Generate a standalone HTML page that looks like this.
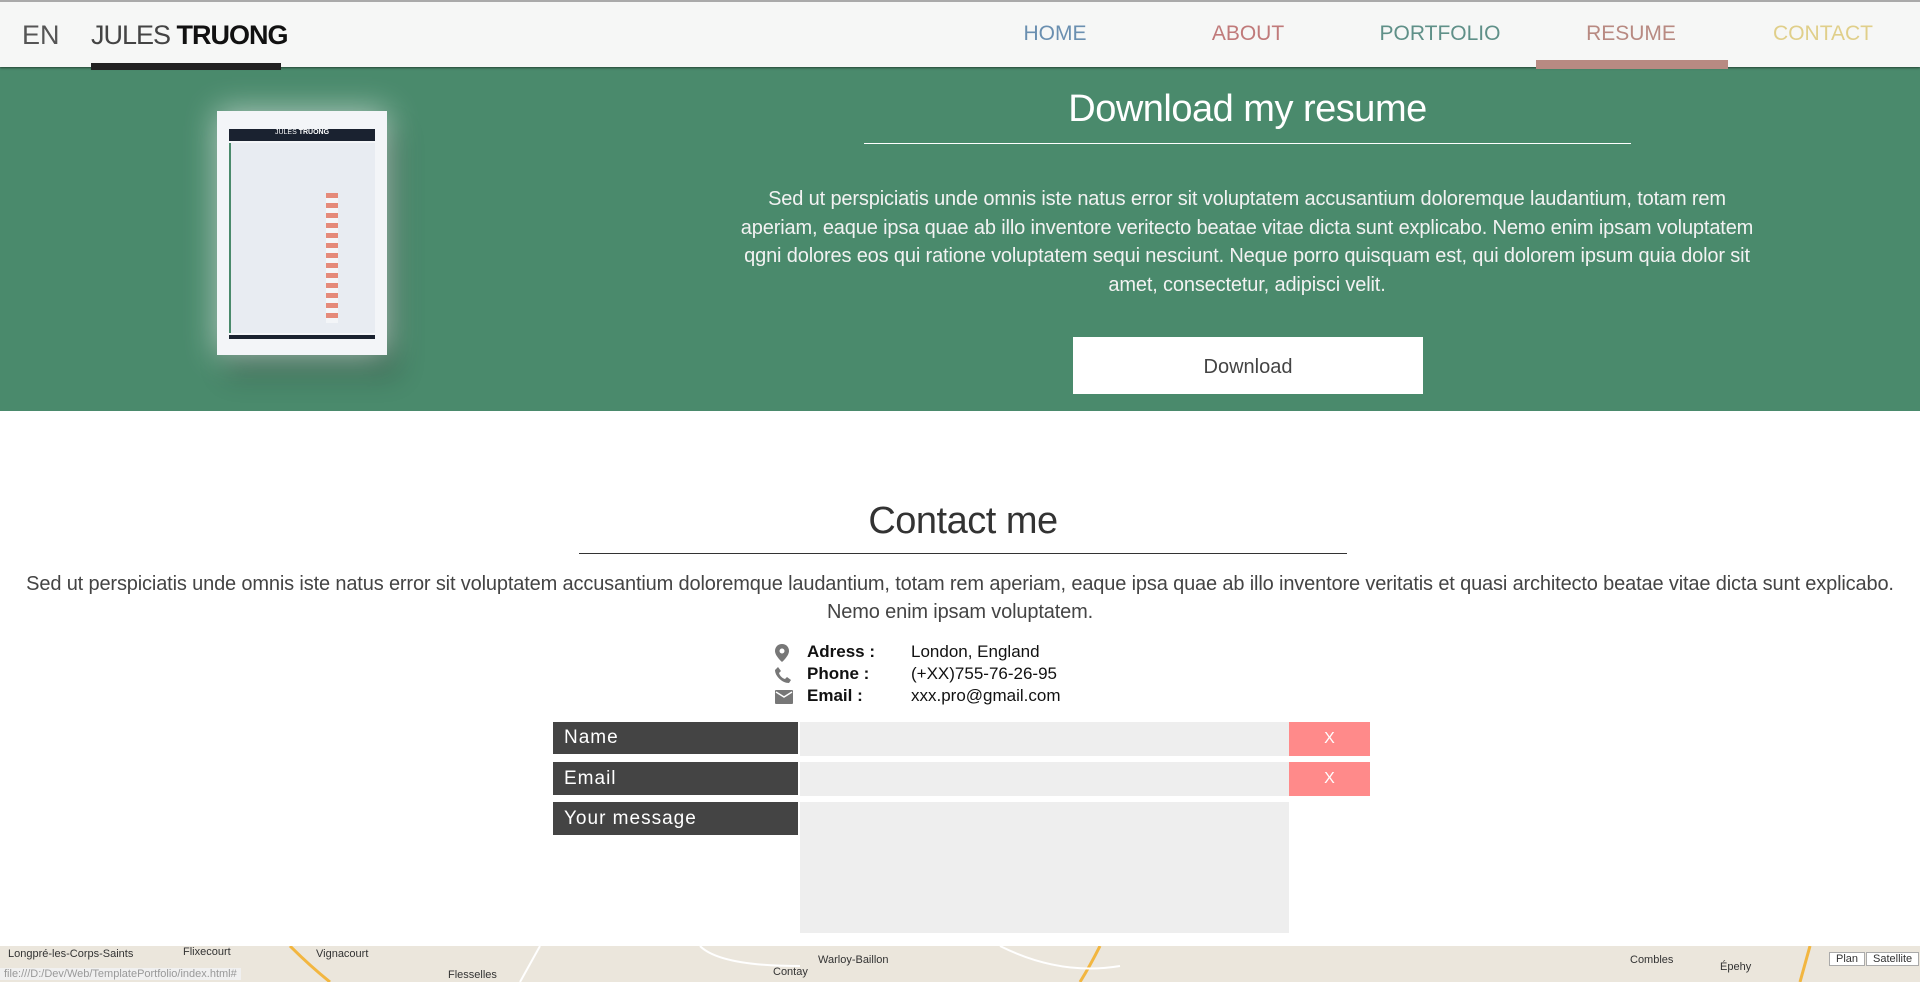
<!DOCTYPE html>
<html><head><meta charset="utf-8"><style>
*{margin:0;padding:0;box-sizing:border-box}
body{width:1920px;height:982px;overflow:hidden;background:#fff;font-family:"Liberation Sans",sans-serif;position:relative;color:#333}
.abs{position:absolute}
#nav{left:0;top:0;width:1920px;height:67px;background:#f6f7f6;border-top:2px solid #aaa;box-shadow:0 1px 2px rgba(0,0,0,.5);z-index:2}
.n{position:absolute;top:20px;font-size:21px;transform:translateX(-50%)}
#green{left:0;top:67px;width:1920px;height:344px;background:#4a8a6c}
</style></head><body>
<div id="nav" class="abs">
 <div class="abs" style="left:22px;top:18px;font-size:27px;color:#555">EN</div>
 <div class="abs" style="left:91px;top:18px;font-size:27px;color:#444;letter-spacing:-1px">JULES <b style="color:#111">TRUONG</b></div>
 <div class="abs" style="left:91px;top:61px;width:190px;height:7px;background:#222"></div>
 <div class="n" style="left:1055px;color:#6a8fb0">HOME</div>
 <div class="n" style="left:1248px;color:#c07a7a">ABOUT</div>
 <div class="n" style="left:1440px;color:#5f9088">PORTFOLIO</div>
 <div class="n" style="left:1631px;color:#b88a82">RESUME</div>
 <div class="n" style="left:1823px;color:#e0cf8a">CONTACT</div>
 <div class="abs" style="left:1536px;top:58px;width:192px;height:9px;background:#b88a82"></div>
</div>
<div id="green" class="abs"></div>
<div class="abs" style="left:217px;top:111px;width:170px;height:244px;background:#f3f5f8;box-shadow:0 0 30px rgba(255,255,255,.6),10px 20px 25px rgba(0,0,0,.25);padding:18px 12px 18px 12px">
 <div style="height:12px;background:#1a2230;color:#fff;font-size:7px;text-align:center">JULES <b>TRUONG</b></div>
 <div style="height:190px;background:#e8ecf2;border-left:2px solid #4a8a6c;margin-top:2px;position:relative">
  <div style="position:absolute;left:95px;top:50px;width:12px;height:130px;background:repeating-linear-gradient(#e58a7a 0 5px,#f3f5f8 5px 10px)"></div>
 </div>
 <div style="height:4px;background:#1a2230;margin-top:2px"></div>
</div>
<div class="abs" style="left:864px;top:88px;width:767px;text-align:center;font-size:38px;color:#fff;letter-spacing:-0.5px">Download my resume</div>
<div class="abs" style="left:864px;top:143px;width:767px;height:1px;background:#fff"></div>
<div class="abs" style="left:740px;top:185px;width:1014px;text-align:center;font-size:20px;line-height:28.5px;color:#f2f2f2;letter-spacing:-0.15px">Sed ut perspiciatis unde omnis iste natus error sit voluptatem accusantium doloremque laudantium, totam rem aperiam, eaque ipsa quae ab illo inventore veritecto beatae vitae dicta sunt explicabo. Nemo enim ipsam voluptatem qgni dolores eos qui ratione voluptatem sequi nesciunt. Neque porro quisquam est, qui dolorem ipsum quia dolor sit amet, consectetur, adipisci velit.</div>
<div class="abs" style="left:1073px;top:337px;width:350px;height:57px;background:#fff;text-align:center;line-height:60px;font-size:20px;color:#444">Download</div>

<div class="abs" style="left:579px;top:500px;width:768px;text-align:center;font-size:38px;color:#333;letter-spacing:-0.5px">Contact me</div>
<div class="abs" style="left:579px;top:553px;width:768px;height:1px;background:#333"></div>
<div class="abs" style="left:10px;top:570px;width:1900px;text-align:center;font-size:20px;line-height:28px;color:#444;letter-spacing:-0.15px">Sed ut perspiciatis unde omnis iste natus error sit voluptatem accusantium doloremque laudantium, totam rem aperiam, eaque ipsa quae ab illo inventore veritatis et quasi architecto beatae vitae dicta sunt explicabo. Nemo enim ipsam voluptatem.</div>
<div class="abs" style="left:775px;top:641px;font-size:17px;line-height:22px;color:#111">
 <div style="position:relative;padding-left:32px"><svg style="position:absolute;left:0;top:3px" width="14" height="18" viewBox="0 0 14 18"><path d="M7 0C3 0 0 3 0 7c0 5 7 11 7 11s7-6 7-11c0-4-3-7-7-7z" fill="#777"/><circle cx="7" cy="7" r="2.5" fill="#fff"/></svg><b style="display:inline-block;width:104px">Adress :</b>London, England</div>
 <div style="position:relative;padding-left:32px"><svg style="position:absolute;left:0;top:3px" width="16" height="17" viewBox="0 0 16 17"><path d="M3 1l3 4-2 2c1 3 3 5 6 6l2-2 4 3-2 3C7 17 0 10 0 4z" fill="#777"/></svg><b style="display:inline-block;width:104px">Phone :</b>(+XX)755-76-26-95</div>
 <div style="position:relative;padding-left:32px"><svg style="position:absolute;left:0;top:5px" width="18" height="14" viewBox="0 0 18 14"><rect width="18" height="14" rx="1" fill="#777"/><path d="M1 2l8 5 8-5" stroke="#fff" stroke-width="1.5" fill="none"/></svg><b style="display:inline-block;width:104px">Email :</b>xxx.pro@gmail.com</div>
</div>
<div class="abs" style="left:553px;top:722px;width:245px;height:32px;background:#444;color:#fff;font-size:19px;line-height:32px;padding-left:11px;letter-spacing:1px">Name</div>
<div class="abs" style="left:800px;top:722px;width:489px;height:34px;background:#eee"></div>
<div class="abs" style="left:1289px;top:722px;width:81px;height:34px;background:#ff8a8a;color:#fff;text-align:center;line-height:34px;font-size:16px">X</div>
<div class="abs" style="left:553px;top:762px;width:245px;height:33px;background:#444;color:#fff;font-size:19px;line-height:33px;padding-left:11px;letter-spacing:1px">Email</div>
<div class="abs" style="left:800px;top:762px;width:489px;height:34px;background:#eee"></div>
<div class="abs" style="left:1289px;top:762px;width:81px;height:34px;background:#ff8a8a;color:#fff;text-align:center;line-height:34px;font-size:16px">X</div>
<div class="abs" style="left:553px;top:802px;width:245px;height:33px;background:#444;color:#fff;font-size:19px;line-height:33px;padding-left:11px;letter-spacing:1px">Your message</div>
<div class="abs" style="left:800px;top:802px;width:489px;height:131px;background:#eee"></div>

<div class="abs" style="left:0;top:946px;width:1920px;height:36px;background:#ebe6dc;font-size:11px;color:#333;overflow:hidden">
 <svg class="abs" style="left:0;top:0" width="1920" height="36"><path d="M290 0 Q310 20 330 36" stroke="#f2b640" stroke-width="3" fill="none"/><path d="M1080 36 Q1090 20 1100 0" stroke="#f2b640" stroke-width="3" fill="none"/><path d="M1810 0 L1800 36" stroke="#f2b640" stroke-width="3" fill="none"/><path d="M540 0 L520 36 M700 0 Q720 20 800 20 M1000 0 Q1060 30 1120 20" stroke="#fff" stroke-width="2" fill="none"/></svg>
 <span class="abs" style="left:8px;top:2px">Longpré-les-Corps-Saints</span>
 <span class="abs" style="left:183px;top:0">Flixecourt</span>
 <span class="abs" style="left:316px;top:2px">Vignacourt</span>
 <span class="abs" style="left:818px;top:8px">Warloy-Baillon</span>
 <span class="abs" style="left:773px;top:20px">Contay</span>
 <span class="abs" style="left:1630px;top:8px">Combles</span>
 <span class="abs" style="left:1720px;top:15px">Épehy</span>
 <span class="abs" style="left:448px;top:23px">Flesselles</span>
 <span class="abs" style="left:1829px;top:6px;background:#fff;padding:0 6px;border:1px solid #aaa">Plan</span>
 <span class="abs" style="left:1866px;top:6px;background:#fff;padding:0 6px;border:1px solid #aaa">Satellite</span>
 <span class="abs" style="left:0;top:22px;background:#f0f0f0;color:#999;padding:0 4px">file:///D:/Dev/Web/TemplatePortfolio/index.html#</span>
</div>
</body></html>
